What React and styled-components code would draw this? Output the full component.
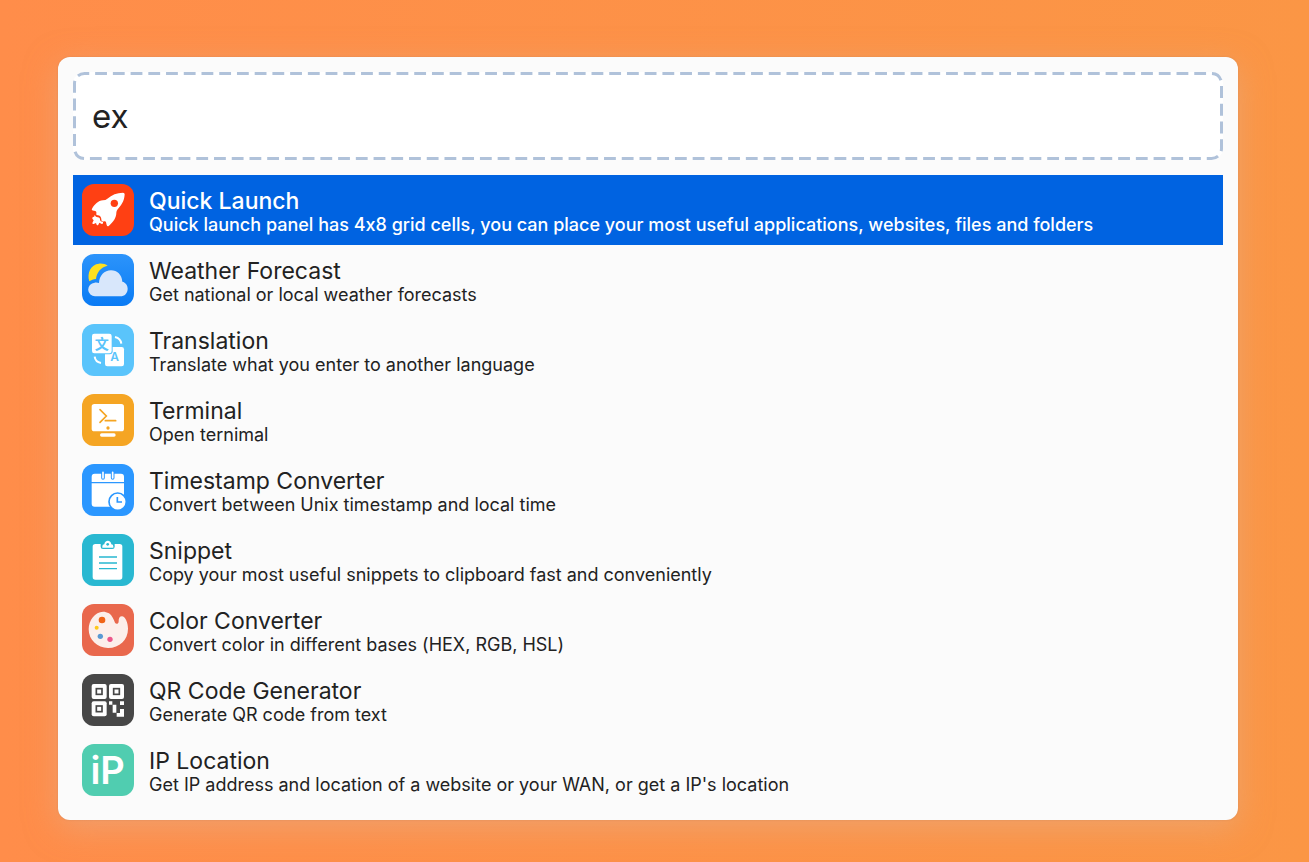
import React, { useState } from "react";
import styled, { createGlobalStyle } from "styled-components";

const GlobalStyle = createGlobalStyle`
  * { box-sizing: border-box; }
  body {
    margin: 0;
    font-family: Inter, "Noto Sans CJK SC", sans-serif;
    font-feature-settings: "calt" 0;
    color: #222;
  }
`;

const Desktop = styled.main`
  min-height: 100vh;
  padding: 57px 71px 42px 58px;
  background: linear-gradient(90deg, #ff8d4a 0%, #fb9645 100%);
`;

const Panel = styled.section`
  display: flex;
  flex-direction: column;
  gap: 15px;
  padding: 15px;
  border-radius: 12px;
  background: #fbfbfb;
  box-shadow: 0 0 2px rgba(180, 120, 80, 0.4), 0 8px 32px rgba(228, 178, 145, 0.5);
`;

const SearchBox = styled.label`
  position: relative;
  display: flex;
  height: 88px;
  border-radius: 12px;
  background: #fff;
`;

const DashedFrame = styled.svg`
  position: absolute;
  inset: 0;
  width: 100%;
  height: 100%;
  overflow: visible;
  pointer-events: none;

  rect {
    width: calc(100% - 3px);
    height: calc(100% - 3px);
    fill: none;
    stroke: #b0c2da;
    stroke-width: 3;
  }
`;

const SearchInput = styled.input`
  flex: 1;
  min-width: 0;
  padding: 0 19px;
  border: 0;
  outline: 0;
  border-radius: 12px;
  background: transparent;
  color: #222;
  font-family: inherit;
  font-size: 33px;
`;

const Results = styled.ul`
  margin: 0;
  padding: 0;
  list-style: none;
`;

const ResultButton = styled.button`
  display: flex;
  align-items: center;
  gap: 15px;
  width: 100%;
  height: 70px;
  padding: 0 9px;
  border: 0;
  outline: 0;
  background: ${(p) => (p.$selected ? "#0063e1" : "transparent")};
  color: ${(p) => (p.$selected ? "#fff" : "#222")};
  font-family: inherit;
  font-feature-settings: inherit;
  font-weight: ${(p) => (p.$selected ? 500 : 400)};
  text-align: left;
`;

const Icon = styled.svg`
  flex: none;
  width: 52px;
  height: 52px;
  border-radius: 12px;
  background: ${(p) => p.$background};
`;

const Copy = styled.span`
  display: flex;
  flex-direction: column;
  min-width: 0;
  padding-top: 4px;
`;

const Title = styled.span`
  font-size: 23px;
  line-height: 26px;
  font-weight: ${(p) => (p.$selected ? 500 : 400)};
`;

const Description = styled.span`
  font-size: 18px;
  line-height: 22px;
`;

const cloud =
  "M40 127a20 20 0 0 1 -2 -41c4 -1 10 0 13 1c1 -22 16 -38 36 -38c19 0 32 13 34 34c10 2 16 11 16 21c0 13 -9 23 -22 23z";

const items = [
  {
    title: "Quick Launch",
    text: "Quick launch panel has 4x8 grid cells, you can place your most useful applications, websites, files and folders",
    background: "#ff4013",
    art: (
      <g fill="#fff">
        <path d="M123 26q5 0 5 5c-1 14 -4 26 -21 45q-4 5 -4 10c0 15 -9 27 -22 39q-5 4 -7 -2l-2 -8q-1 -4 -5 -3c-6 2 -9 0 -9 -6c0 -7 -4 -12 -11 -12q-6 0 -4 -6c1 -5 -1 -8 -7 -8q-9 -1 -6 -6c8 -13 18 -24 33 -25q8 0 13 -5c14 -12 28 -18 47 -18z" />
        <path d="M38 93q3 7 9 7q8 1 7 8q1 5 7 5q3 0 2 4q-1 4 -5 2l-6 -3l-3 6q-2 3 -5 0l-2 -5l-7 3q-4 1 -4 -3l4 -8l-4 -5q-1 -4 3 -5q4 0 4 -6z" />
        <circle cx="97" cy="58" r="11" fill="#ff4013" />
      </g>
    ),
  },
  {
    title: "Weather Forecast",
    text: "Get national or local weather forecasts",
    background: "linear-gradient(#2c94fb, #0a7bf4)",
    art: (
      <>
        <path d="M22 82C14 58 26 31 51 29c11 -1 20 2 26 6C56 40 44 55 42 75c-8 0 -14 3 -20 7z" fill="#ffe01f" />
        <path d={cloud} fill="#d8e7fb" />
      </>
    ),
  },
  {
    title: "Translation",
    text: "Translate what you enter to another language",
    background: "#5ac4fb",
    art: (
      <>
        <rect x="69" y="69" width="57" height="58" rx="7" fill="#fff" />
        <rect x="27" y="26" width="65" height="65" rx="9" fill="#5ac4fb" />
        <rect x="30" y="29" width="59" height="59" rx="7" fill="#fff" />
        <text x="59" y="75" textAnchor="middle" fontSize="42" fontWeight="700" fontFamily="Noto Sans CJK SC" fill="#5ac4fb">文</text>
        <text x="98" y="112" textAnchor="middle" fontSize="36" fontWeight="600" fill="#5ac4fb">A</text>
        <path d="M99 39q17 4 19 20M38 98q2 16 19 19" fill="none" stroke="#fff" strokeWidth="6" />
      </>
    ),
  },
  {
    title: "Terminal",
    text: "Open ternimal",
    background: "#f5a523",
    art: (
      <>
        <rect x="29" y="30" width="97" height="82" rx="8" fill="#fff" />
        <rect x="54" y="118" width="47" height="10" rx="5" fill="#fff" />
        <path d="M54 47l19 19l-19 19M70 80h31" fill="none" stroke="#f5a523" strokeWidth="5" strokeLinecap="round" />
        <circle cx="78" cy="102" r="5" fill="#f5a523" />
      </>
    ),
  },
  {
    title: "Timestamp Converter",
    text: "Convert between Unix timestamp and local time",
    background: "#2b97ff",
    art: (
      <>
        <path d="M29 54V38q0 -9 9 -9h79q9 0 9 9v16zM29 58h97v60q0 10 -10 10H38q-9 0 -9 -9z" fill="#fff" />
        <path d="M63 24v18M92 24v18" stroke="#2b97ff" strokeWidth="11" strokeLinecap="round" />
        <path d="M63 25v17M92 25v17" stroke="#fff" strokeWidth="5" strokeLinecap="round" />
        <circle cx="107" cy="113" r="26" fill="#fff" stroke="#2b97ff" strokeWidth="5" />
        <path d="M106 99v15h14" fill="none" stroke="#2b97ff" strokeWidth="5" />
      </>
    ),
  },
  {
    title: "Snippet",
    text: "Copy your most useful snippets to clipboard fast and conveniently",
    background: "#29b8d1",
    art: (
      <>
        <rect x="32" y="30" width="89" height="107" rx="8" fill="#fff" />
        <path d="M56 29h42v9q0 7 -7 7H63q-7 0 -7 -7z" fill="#29b8d1" />
        <path d="M61 41v-4q0 -6 6 -6c1 -14 20 -14 21 0q6 0 6 6v4z" fill="#fff" />
        <circle cx="77" cy="31" r="4" fill="#29b8d1" />
        <path d="M51 69h54M51 87h54M51 104h54" stroke="#29b8d1" strokeWidth="4" />
      </>
    ),
  },
  {
    title: "Color Converter",
    text: "Convert color in different bases (HEX, RGB, HSL)",
    background: "#e9684d",
    art: (
      <>
        <path d="M81 28C50 11 20 42 20 76c0 32 26 56 58 56c35 0 60 -25 60 -58c0 -19 -9 -37 -18 -37c-7 0 -10 6 -10 14c1 9 -8 11 -11 5c-4 -10 -9 -22 -18 -28z" fill="#fcefeb" />
        <circle cx="60" cy="48" r="10" fill="#f06418" />
        <circle cx="44" cy="71" r="6" fill="#fdc91c" />
        <circle cx="55" cy="97" r="8" fill="#5a99d3" />
        <circle cx="84" cy="106" r="8" fill="#ed568a" />
      </>
    ),
  },
  {
    title: "QR Code Generator",
    text: "Generate QR code from text",
    background: "#474747",
    art: (
      <>
        {[[29, 30], [81, 30], [29, 82]].map(([x, y]) => (
          <g key={`${x}-${y}`} transform={`translate(${x} ${y})`}>
            <rect width="45" height="45" rx="6" fill="#fff" />
            <rect x="14" y="14" width="17" height="17" fill="#fff" stroke="#474747" strokeWidth="5" />
          </g>
        ))}
        <path d="M81 82h10v10h-10zM114 82h12v11h-12zM92 92h11v24h-11zM114 105h12v23h-22v-11h10z" fill="#fff" />
      </>
    ),
  },
  {
    title: "IP Location",
    text: "Get IP address and location of a website or your WAN, or get a IP's location",
    background: "#50cdb0",
    art: (
      <text x="77" y="120" textAnchor="middle" fontSize="114" fontWeight="600" fill="#fff">iP</text>
    ),
  },
];

export default function App() {
  const [query, setQuery] = useState("ex");
  const [selected, setSelected] = useState(0);

  return (
    <>
      <GlobalStyle />
      <Desktop>
        <Panel>
          <SearchBox>
            <DashedFrame aria-hidden="true">
              <rect x="1.5" y="1.5" rx="10" pathLength="414" strokeDasharray="2 1" strokeDashoffset="1.2" />
            </DashedFrame>
            <SearchInput aria-label="Search" value={query} onChange={(e) => setQuery(e.target.value)} />
          </SearchBox>
          <Results>
            {items.map((item, index) => (
              <li key={item.title}>
                <ResultButton type="button" $selected={index === selected} onClick={() => setSelected(index)}>
                  <Icon viewBox="0 0 156 156" $background={item.background} aria-hidden="true">
                    {item.art}
                  </Icon>
                  <Copy>
                    <Title $selected={index === selected}>{item.title}</Title>
                    <Description>{item.text}</Description>
                  </Copy>
                </ResultButton>
              </li>
            ))}
          </Results>
        </Panel>
      </Desktop>
    </>
  );
}
